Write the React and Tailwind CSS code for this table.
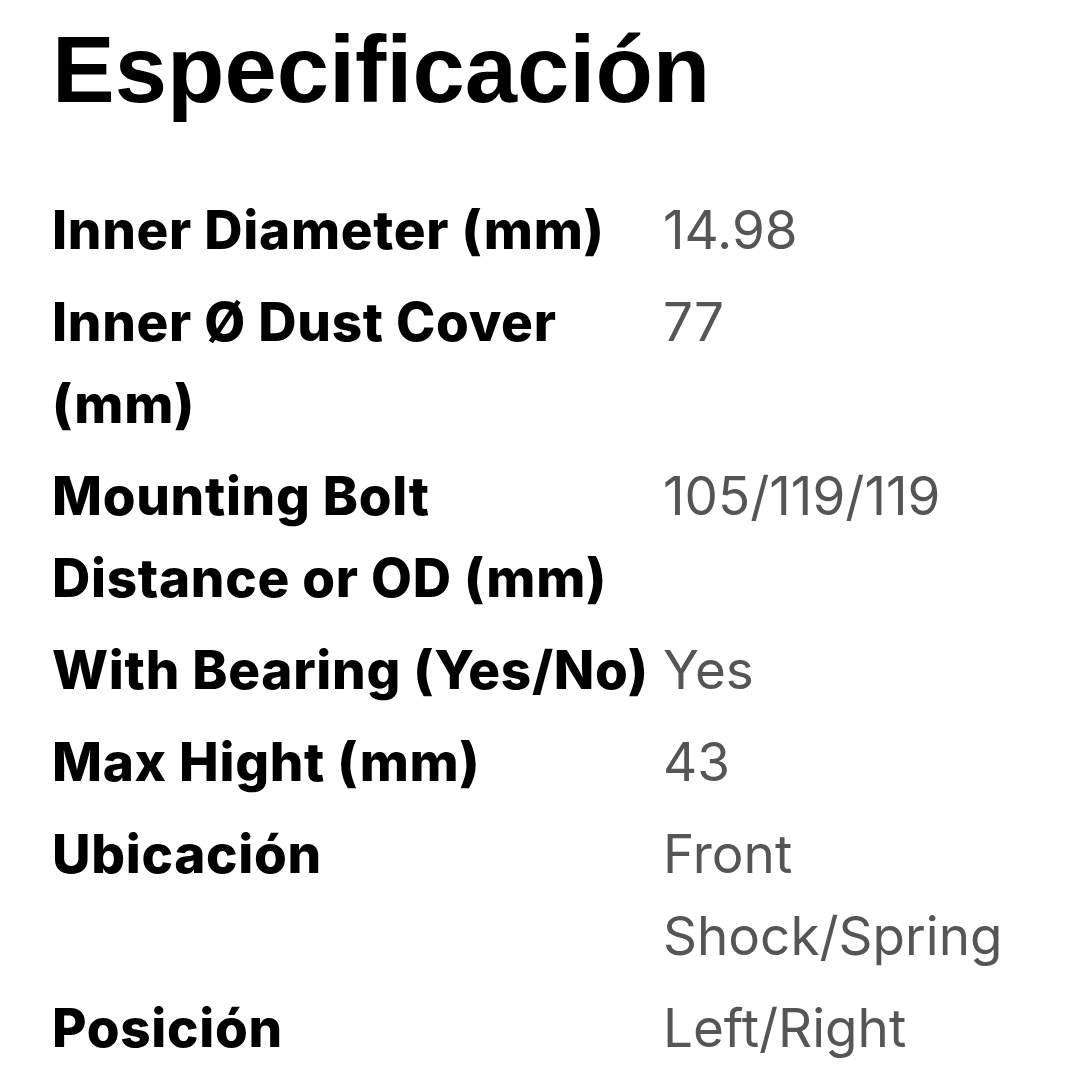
import React from "react";

const specs = [
  { label: "Inner Diameter (mm)", value: "14.98" },
  { label: "Inner Ø Dust Cover (mm)", value: "77" },
  { label: "Mounting Bolt Distance or OD (mm)", value: "105/119/119" },
  { label: "With Bearing (Yes/No)", value: "Yes" },
  { label: "Max Hight (mm)", value: "43" },
  { label: "Ubicación", value: "Front Shock/Spring" },
  { label: "Posición", value: "Left/Right" },
];

const App = () => {
  return (
    <div className="min-h-screen bg-white pl-[52px] pt-[23px]">
      {/* Title */}
      <h1 className="font-['Liberation_Sans',Arial,sans-serif] text-[94px] font-bold leading-none text-black mb-[67px]">
        Especificación
      </h1>

      {/* Spec table */}
      <div className="grid grid-cols-[611px_1fr] font-['Inter',sans-serif] text-[53px] leading-[82px]">
        {specs.map((spec) => (
          <React.Fragment key={spec.label}>
            <div className="py-[5px] pr-[8px] font-extrabold tracking-[0.7px] text-black">
              {spec.label}
            </div>
            <div className="py-[5px] pr-[40px] text-[#555555]">{spec.value}</div>
          </React.Fragment>
        ))}
      </div>
    </div>
  );
};

export default App;
